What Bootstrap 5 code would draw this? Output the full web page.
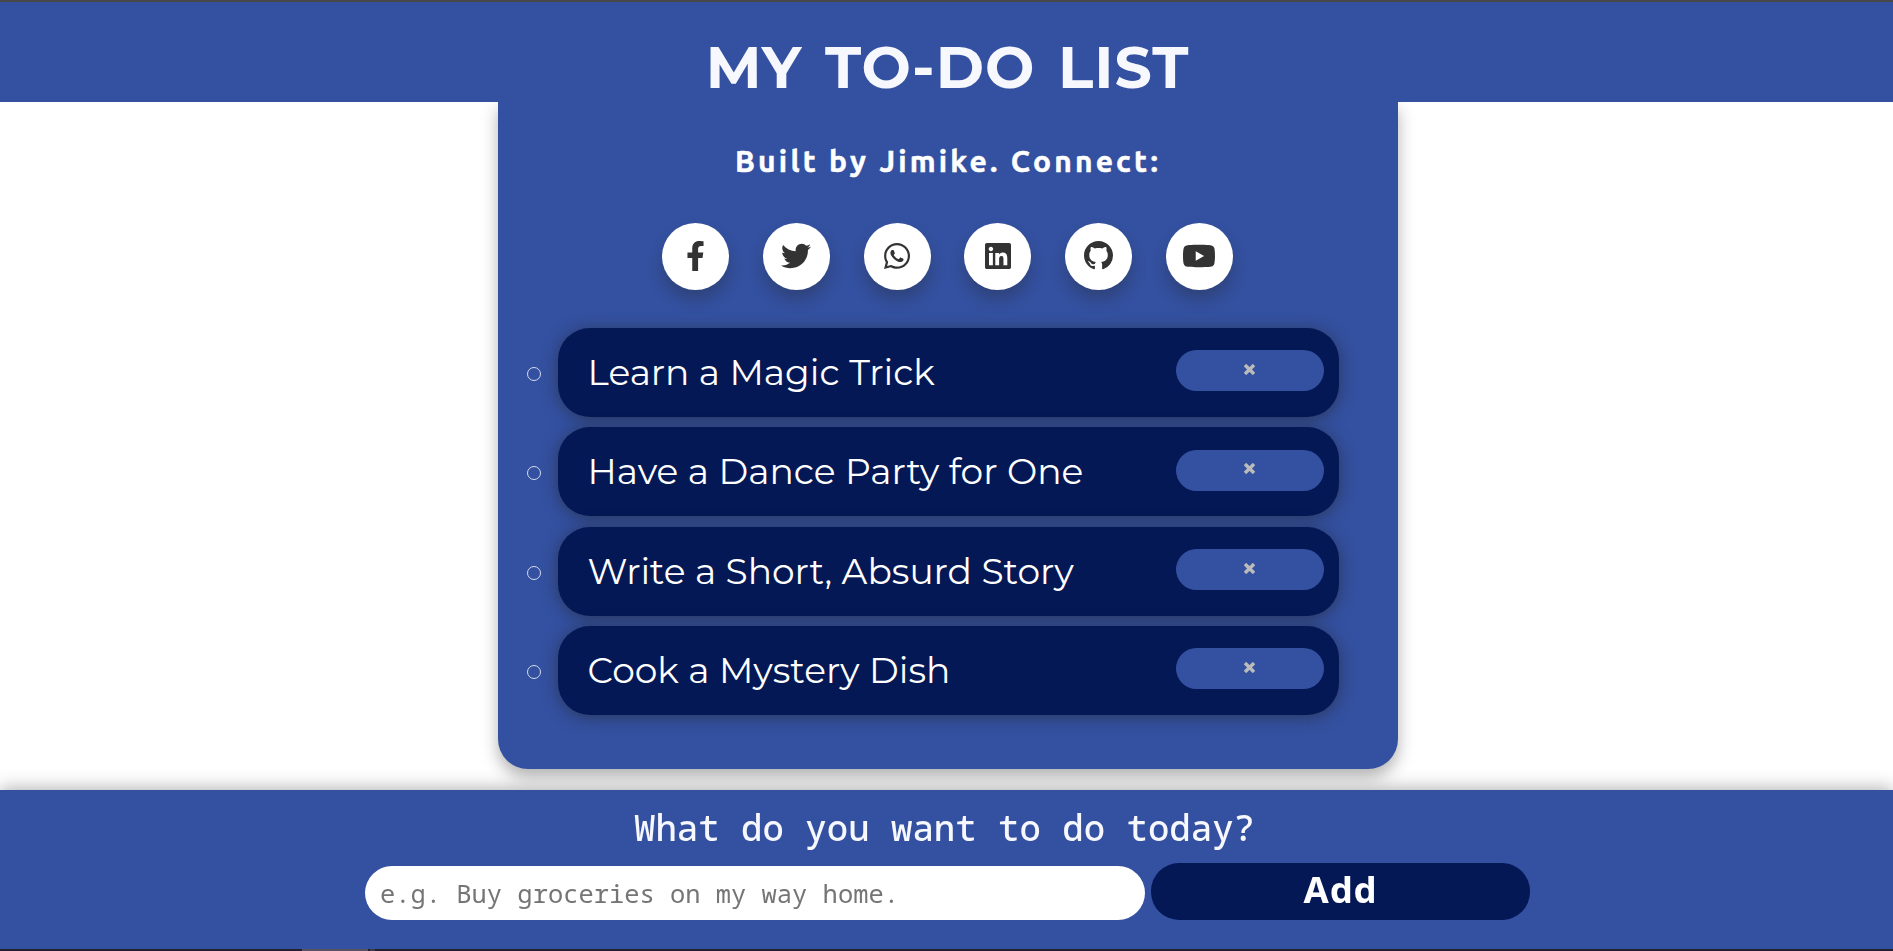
<!DOCTYPE html>
<html lang="en">
<head>
<meta charset="utf-8">
<meta name="viewport" content="width=device-width, initial-scale=1">
<title>My To-Do List</title>
<link href="https://cdn.jsdelivr.net/npm/bootstrap@5.3.0/dist/css/bootstrap.min.css" rel="stylesheet">
<style>
:root { --todo-blue: #3451a1; --todo-navy: #041855; --todo-pale: #f7f8fd; }
body { height: 951px; border-top: 2px solid #484848; background: #fff; font-family: Montserrat, Inter, sans-serif; }
.todo-header { height: 100px; padding-left: 2px; background: var(--todo-blue); }
.todo-title { margin-top: 31px; font-size: 58.5px; line-height: 68px; font-weight: 700; color: var(--todo-pale); letter-spacing: 1px; word-spacing: 5px; }
.todo-stage { padding-left: 3px; }
.todo-panel { width: 900px; height: 667px; background: var(--todo-blue); border-radius: 0 0 30px 30px; box-shadow: 0 8px 16px rgba(35,35,35,.35); clip-path: inset(0 -40px -40px -40px); }
.todo-credit { padding: 39px 0 0; font: 700 30px/40px Ubuntu, "Noto Sans", sans-serif; letter-spacing: 3.2px; -webkit-text-stroke: .5px #fff; }
.social-row { margin-top: 42px; padding-right: 1px; gap: 33.8px; }
.social-link { width: 67px; height: 67px; background: #fff; color: #333; box-shadow: 0 10px 15px rgba(35,35,35,.3); }
.social-link svg { margin-bottom: 2px; }
.todo-items { margin: 38px 59px 0 29px; gap: 10.4px; }
.todo-bullet { width: 14px; height: 14px; border: 1px solid #d5dbec; margin: 3px 17px 0 0; }
.todo-item { height: 89px; border-radius: 32px; background: var(--todo-navy); padding: 0 15px 0 29.5px; font-size: 36px; box-shadow: 0 2px 16px rgba(35,35,35,.55); }
.todo-text { margin-bottom: 1px; }
.todo-remove { width: 148px; height: 41px; border-radius: 20.5px; background: var(--todo-blue); margin-bottom: 3.4px; padding: 0 1px 3px 0; color: #bbb; border: 0; }
.todo-footer { height: 161px; background: var(--todo-blue); box-shadow: 0 -2px 16px rgba(35,35,35,.35); font-family: Consolas, "Noto Sans Mono", "DejaVu Sans Mono", monospace; }
.todo-prompt { margin-top: 16px; padding-right: 4px; font-size: 35.7px; line-height: 42px; font-weight: 500; color: var(--todo-pale); }
.todo-form { margin-top: 15px; padding-left: 2px; gap: 6px; }
.todo-input { width: 780px; height: 54px; border: 0; border-radius: 27px; padding: 0 15px 1px; font-size: 25.45px; color: #333; background: #fff; }
.todo-input::placeholder { color: #757575; opacity: 1; }
.todo-add { width: 379px; height: 57px; border: 0; border-radius: 28px; background: var(--todo-navy); font: 700 36.5px/50px "Noto Sans", sans-serif; padding: 0 0 6px; letter-spacing: .8px; }
.screen-edge { height: 2px; background: #20232c; padding-left: 302px; }
.edge-long { width: 66px; background: #55565d; }
.edge-short { width: 5px; margin-left: 2px; background: #3b3d45; }
</style>
<script src="https://cdn.jsdelivr.net/npm/bootstrap@5.3.0/dist/js/bootstrap.bundle.min.js"></script>
</head>
<body class="overflow-hidden position-relative">
<header class="todo-header d-flex justify-content-center"><h1 class="todo-title mb-0 text-nowrap">MY TO-DO LIST</h1></header>
<div class="todo-stage">
<main class="todo-panel mx-auto text-white">
  <h2 class="todo-credit text-center mb-0">Built by Jimike. Connect:</h2>
  <nav class="social-row d-flex justify-content-center" aria-label="Social links">
    <a class="social-link rounded-circle d-flex align-items-center justify-content-center" href="#" aria-label="Facebook"><svg width="19" height="30" viewBox="0 0 320 512" fill="currentColor"><path d="M279.14 288l14.22-92.66h-88.91v-60.13c0-25.35 12.42-50.06 52.24-50.06h40.42V6.260S260.43 0 225.36 0c-73.220 0-121.080 44.380-121.080 124.720v70.620H22.890V288h81.390v224h100.170V288z"/></svg></a>
    <a class="social-link rounded-circle d-flex align-items-center justify-content-center" href="#" aria-label="Twitter"><svg width="30" height="30" viewBox="0 0 512 512" fill="currentColor"><path d="M459.37 151.716c.325 4.548.325 9.097.325 13.645 0 138.72-105.583 298.558-298.558 298.558-59.452 0-114.680-17.219-161.137-47.106 8.447.974 16.568 1.299 25.340 1.299 49.055 0 94.213-16.568 130.274-44.832-46.132-.975-84.792-31.188-98.112-72.772 6.498.974 12.995 1.624 19.818 1.624 9.421 0 18.843-1.300 27.614-3.573-48.081-9.747-84.143-51.980-84.143-102.985v-1.299c13.969 7.797 30.214 12.670 47.431 13.319-28.264-18.843-46.781-51.005-46.781-87.391 0-19.492 5.197-37.360 14.294-52.954 51.655 63.675 129.300 105.258 216.365 109.807-1.624-7.797-2.599-15.918-2.599-24.040 0-57.828 46.782-104.934 104.934-104.934 30.213 0 57.502 12.670 76.670 33.137 23.715-4.548 46.456-13.320 66.599-25.340-7.798 24.366-24.366 44.833-46.132 57.827 21.117-2.273 41.584-8.122 60.426-16.243-14.292 20.791-32.161 39.308-52.628 54.253z"/></svg></a>
    <a class="social-link rounded-circle d-flex align-items-center justify-content-center" href="#" aria-label="WhatsApp"><svg width="26" height="30" viewBox="0 0 448 512" fill="currentColor"><path d="M380.900 97.100C339 55.100 283.200 32 223.900 32c-122.400 0-222 99.600-222 222 0 39.100 10.200 77.300 29.600 111L0 480l117.700-30.900c32.400 17.700 68.900 27 106.100 27h.1c122.300 0 224.100-99.600 224.100-222 0-59.300-25.200-115-67.100-157zm-157 341.600c-33.200 0-65.700-8.900-94-25.700l-6.700-4-69.800 18.300L72 359.200l-4.400-7c-18.500-29.400-28.200-63.300-28.200-98.200 0-101.700 82.800-184.500 184.600-184.500 49.300 0 95.600 19.200 130.400 54.100 34.800 34.900 56.200 81.200 56.100 130.500 0 101.800-84.900 184.600-186.600 184.600zm101.200-138.200c-5.500-2.800-32.800-16.200-37.900-18-5.100-1.900-8.800-2.800-12.500 2.800-3.700 5.600-14.300 18-17.600 21.800-3.200 3.700-6.500 4.200-12 1.400-32.600-16.300-54-29.100-75.500-66-5.700-9.800 5.700-9.100 16.300-30.300 1.800-3.700.9-6.900-.5-9.700-1.400-2.800-12.500-30.100-17.100-41.200-4.500-10.800-9.100-9.300-12.500-9.500-3.200-.2-6.900-.2-10.600-.2-3.700 0-9.700 1.400-14.800 6.900-5.100 5.600-19.400 19-19.400 46.300 0 27.300 19.900 53.700 22.600 57.400 2.800 3.700 39.100 59.700 94.800 83.800 35.200 15.200 49 16.500 66.600 13.900 10.700-1.600 32.800-13.400 37.400-26.400 4.600-13 4.600-24.100 3.200-26.400-1.300-2.500-5-3.900-10.500-6.600z"/></svg></a>
    <a class="social-link rounded-circle d-flex align-items-center justify-content-center" href="#" aria-label="LinkedIn"><svg width="26" height="30" viewBox="0 0 448 512" fill="currentColor"><path d="M416 32H31.900C14.300 32 0 46.500 0 64.300v383.400C0 465.500 14.300 480 31.900 480H416c17.600 0 32-14.500 32-32.300V64.300c0-17.800-14.400-32.300-32-32.300zM135.400 416H69V202.200h66.500V416zm-33.200-243c-21.300 0-38.500-17.300-38.500-38.500S80.900 96 102.200 96c21.200 0 38.500 17.300 38.500 38.500 0 21.300-17.200 38.500-38.500 38.500zm282.100 243h-66.400V312c0-24.800-.5-56.700-34.500-56.700-34.600 0-39.900 27-39.900 54.900V416h-66.400V202.200h63.700v29.200h.9c8.900-16.800 30.600-34.500 62.900-34.500 67.200 0 79.700 44.300 79.700 101.900V416z"/></svg></a>
    <a class="social-link rounded-circle d-flex align-items-center justify-content-center" href="#" aria-label="GitHub"><svg width="29" height="29" viewBox="0 0 16 16" fill="currentColor"><path d="M8 0C3.580 0 0 3.580 0 8c0 3.540 2.290 6.530 5.470 7.590.4.070.55-.17.55-.38 0-.19-.01-.82-.01-1.490-2.010.37-2.530-.49-2.690-.94-.09-.23-.48-.94-.82-1.130-.28-.15-.68-.52-.01-.53.63-.01 1.080.58 1.230.82.72 1.210 1.870.87 2.330.66.070-.52.28-.87.51-1.070-1.780-.2-3.640-.89-3.640-3.950 0-.87.31-1.590.82-2.150-.08-.2-.36-1.020.08-2.120 0 0 .67-.21 2.200.82.64-.18 1.320-.27 2-.27s1.360.09 2 .27c1.530-1.040 2.200-.82 2.200-.82.44 1.100.16 1.920.08 2.120.51.56.82 1.270.82 2.150 0 3.070-1.870 3.750-3.650 3.950.29.25.54.73.54 1.480 0 1.070-.01 1.930-.01 2.200 0 .21.15.46.55.38A8.010 8.010 0 0 0 16 8c0-4.420-3.580-8-8-8z"/></svg></a>
    <a class="social-link rounded-circle d-flex align-items-center justify-content-center" href="#" aria-label="YouTube"><svg width="34" height="30" viewBox="0 0 576 512" fill="currentColor"><path d="M549.655 124.083c-6.281-23.650-24.787-42.276-48.284-48.597C458.781 64 288 64 288 64S117.220 64 74.629 75.486c-23.497 6.322-42.003 24.947-48.284 48.597-11.412 42.867-11.412 132.305-11.412 132.305s0 89.438 11.412 132.305c6.281 23.650 24.787 41.500 48.284 47.821C117.220 448 288 448 288 448s170.780 0 213.371-11.486c23.497-6.321 42.003-24.171 48.284-47.821 11.412-42.867 11.412-132.305 11.412-132.305s0-89.438-11.412-132.305zm-317.510 213.508V175.185l142.739 81.205-142.739 81.201z"/></svg></a>
  </nav>
  <ul class="todo-items list-unstyled d-flex flex-column mb-0">
    <li class="d-flex align-items-center"><span class="todo-bullet rounded-circle flex-shrink-0"></span><div class="todo-item flex-grow-1 d-flex align-items-center justify-content-between"><span class="todo-text">Learn a Magic Trick</span><button class="todo-remove d-flex align-items-center justify-content-center" aria-label="Remove"><svg width="11" height="11" viewBox="0 0 11 11" stroke="currentColor" stroke-width="3.4"><path d="M1 1l9 9M10 1l-9 9"/></svg></button></div></li>
    <li class="d-flex align-items-center"><span class="todo-bullet rounded-circle flex-shrink-0"></span><div class="todo-item flex-grow-1 d-flex align-items-center justify-content-between"><span class="todo-text">Have a Dance Party for One</span><button class="todo-remove d-flex align-items-center justify-content-center" aria-label="Remove"><svg width="11" height="11" viewBox="0 0 11 11" stroke="currentColor" stroke-width="3.4"><path d="M1 1l9 9M10 1l-9 9"/></svg></button></div></li>
    <li class="d-flex align-items-center"><span class="todo-bullet rounded-circle flex-shrink-0"></span><div class="todo-item flex-grow-1 d-flex align-items-center justify-content-between"><span class="todo-text">Write a Short, Absurd Story</span><button class="todo-remove d-flex align-items-center justify-content-center" aria-label="Remove"><svg width="11" height="11" viewBox="0 0 11 11" stroke="currentColor" stroke-width="3.4"><path d="M1 1l9 9M10 1l-9 9"/></svg></button></div></li>
    <li class="d-flex align-items-center"><span class="todo-bullet rounded-circle flex-shrink-0"></span><div class="todo-item flex-grow-1 d-flex align-items-center justify-content-between"><span class="todo-text">Cook a Mystery Dish</span><button class="todo-remove d-flex align-items-center justify-content-center" aria-label="Remove"><svg width="11" height="11" viewBox="0 0 11 11" stroke="currentColor" stroke-width="3.4"><path d="M1 1l9 9M10 1l-9 9"/></svg></button></div></li>
  </ul>
</main>
</div>
<footer class="todo-footer fixed-bottom d-flex flex-column">
  <label class="todo-prompt text-center" for="newTask">What do you want to do today?</label>
  <form class="todo-form d-flex justify-content-center align-items-end">
    <input class="todo-input" id="newTask" type="text" placeholder="e.g. Buy groceries on my way home.">
    <button class="todo-add text-white" type="button">Add</button>
  </form>
  <div class="screen-edge d-flex mt-auto"><span class="edge-long"></span><span class="edge-short"></span></div>
</footer>
</body>
</html>
